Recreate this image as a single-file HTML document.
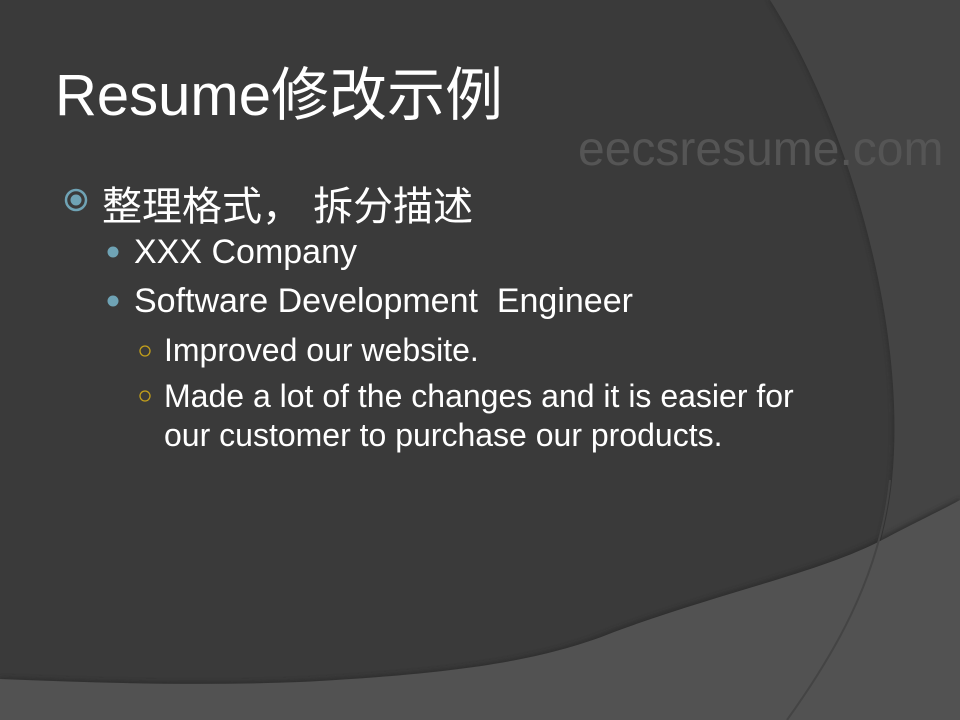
<!DOCTYPE html>
<html><head><meta charset="utf-8"><style>
body{margin:0;width:960px;height:720px;overflow:hidden;background:#3a3a3a;position:relative;font-family:"Liberation Sans","Noto Sans CJK SC",sans-serif;color:#fff}
svg{position:absolute;left:0;top:0}
.t{position:absolute;white-space:nowrap}
</style></head><body>
<svg width="960" height="720">
<defs><filter id="s"><feGaussianBlur stdDeviation="2"/></filter></defs>
<path d="M768,0 C850,130 905,330 890,480 C880,580 830,660 787,720 L960,720 L960,0 Z" fill="#2a2a2a" filter="url(#s)" opacity="0.6"/>
<path d="M770,0 C852,130 907,330 892,480 C882,580 832,660 789,720 L960,720 L960,0 Z" fill="#444"/>
<path d="M0,677 C100,681 200,684 300,680 C450,672 540,660 612,630 C720,590 820,570 882,537 C910,522 940,508 960,498 L960,720 L0,720 Z" fill="#262626" filter="url(#s)" opacity="0.6"/>
<path d="M0,679 C100,683 200,686 300,682 C450,674 540,662 614,632 C722,592 822,572 884,539 C912,524 942,510 960,500 L960,720 L0,720 Z" fill="#525252"/>
<path d="M890,480 C880,580 830,660 787,720" stroke="#444" stroke-width="2" fill="none"/>
<circle cx="76" cy="200" r="10" fill="none" stroke="#6fa3b5" stroke-width="2.5"/>
<circle cx="76" cy="200" r="5.5" fill="#6fa3b5"/>
<circle cx="113" cy="252" r="5.5" fill="#6fa3b5"/>
<circle cx="113" cy="301" r="5.5" fill="#6fa3b5"/>
<circle cx="145" cy="351" r="5" fill="none" stroke="#c4a01a" stroke-width="1.3"/>
<circle cx="145" cy="396" r="5" fill="none" stroke="#c4a01a" stroke-width="1.3"/>
</svg>
<div class="t" style="left:55px;top:48px;font-size:58px;">Resume修改示例</div>
<div class="t" style="left:578px;top:122px;font-size:48px;color:#555">eecsresume.com</div>
<div class="t" style="left:102px;top:174px;font-size:40px;">整理格式， 拆分描述</div>
<div class="t" style="left:134px;top:233px;font-size:34px;">XXX Company</div>
<div class="t" style="left:134px;top:282px;font-size:34px;">Software Development&nbsp; Engineer</div>
<div class="t" style="left:164px;top:332px;font-size:32px;">Improved our website.</div>
<div class="t" style="left:164px;top:377px;font-size:32px;line-height:39px">Made a lot of the changes and it is easier for<br>our customer to purchase our products.</div>
</body></html>
